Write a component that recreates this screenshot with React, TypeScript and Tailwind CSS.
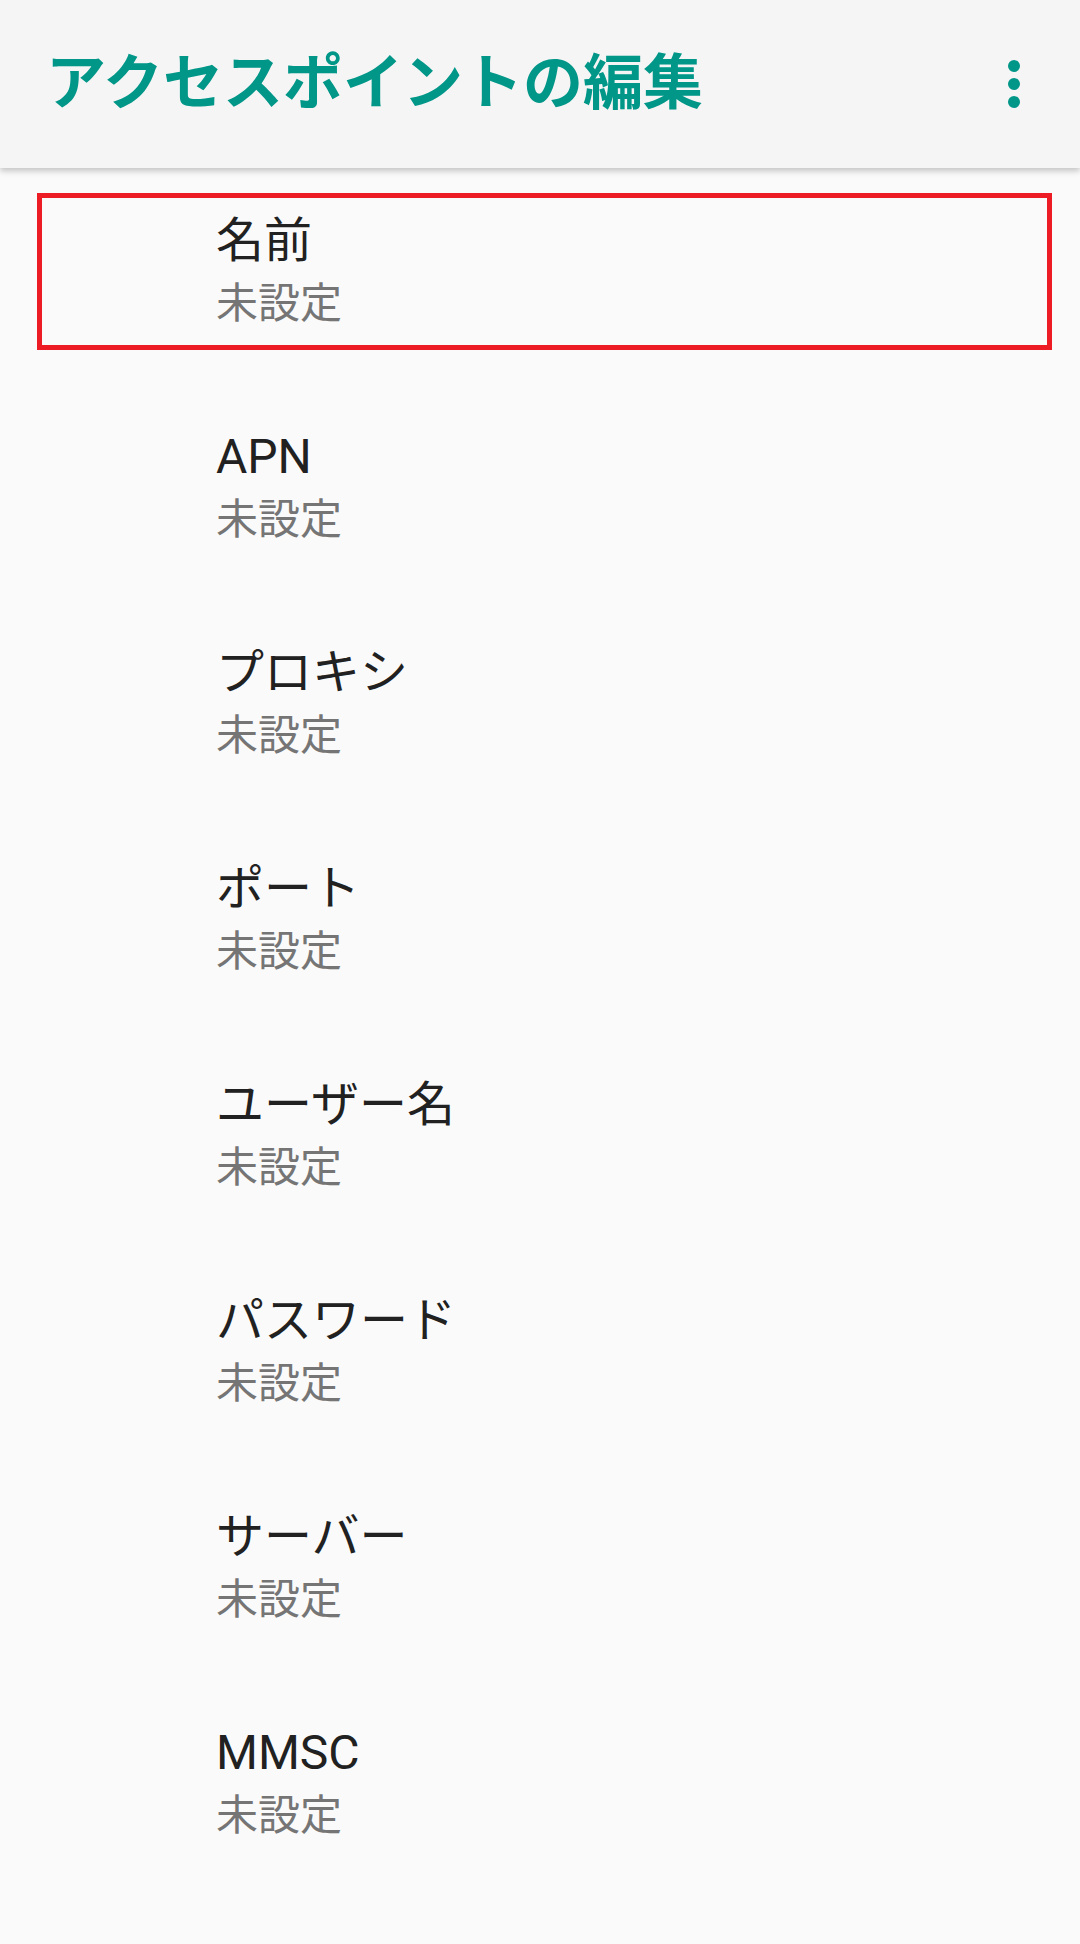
import React from 'react';

const items = ['名前', 'APN', 'プロキシ', 'ポート', 'ユーザー名', 'パスワード', 'サーバー', 'MMSC', 'MMSプロキシ'];

const font = { fontFamily: 'Roboto, "Noto Sans CJK JP", sans-serif' };

const App: React.FC = () => {
  return (
    <div className="w-[1080px] h-[1944px] overflow-hidden bg-[#fafafa]" style={font}>
      <header className="relative z-10 h-[168px] bg-[#f5f5f5] flex items-center justify-between pl-[46px] pr-[60px] shadow-[0_3px_6px_rgba(0,0,0,0.22)]">
        <h1 className="text-[60px] font-bold text-[#009688] leading-none">アクセスポイントの編集</h1>
        <div className="flex flex-col gap-[6px]">
          <span className="w-3 h-3 rounded-full bg-[#009688]" />
          <span className="w-3 h-3 rounded-full bg-[#009688]" />
          <span className="w-3 h-3 rounded-full bg-[#009688]" />
        </div>
      </header>

      <ul>
        {items.map((title, i) => (
          <li key={title} className="relative h-[216px] pl-[216px] pt-[41px]">
            {i === 0 && (
              <div className="absolute left-[37px] top-[25px] w-[1015px] h-[157px] border-[5px] border-[#ed1c24]" />
            )}
            <div className="text-[48px] leading-[64px] text-[#212121] mb-[3px]">{title}</div>
            <div className="text-[42px] leading-[56px] text-[#757575]">未設定</div>
          </li>
        ))}
      </ul>
    </div>
  );
};

export default App;
